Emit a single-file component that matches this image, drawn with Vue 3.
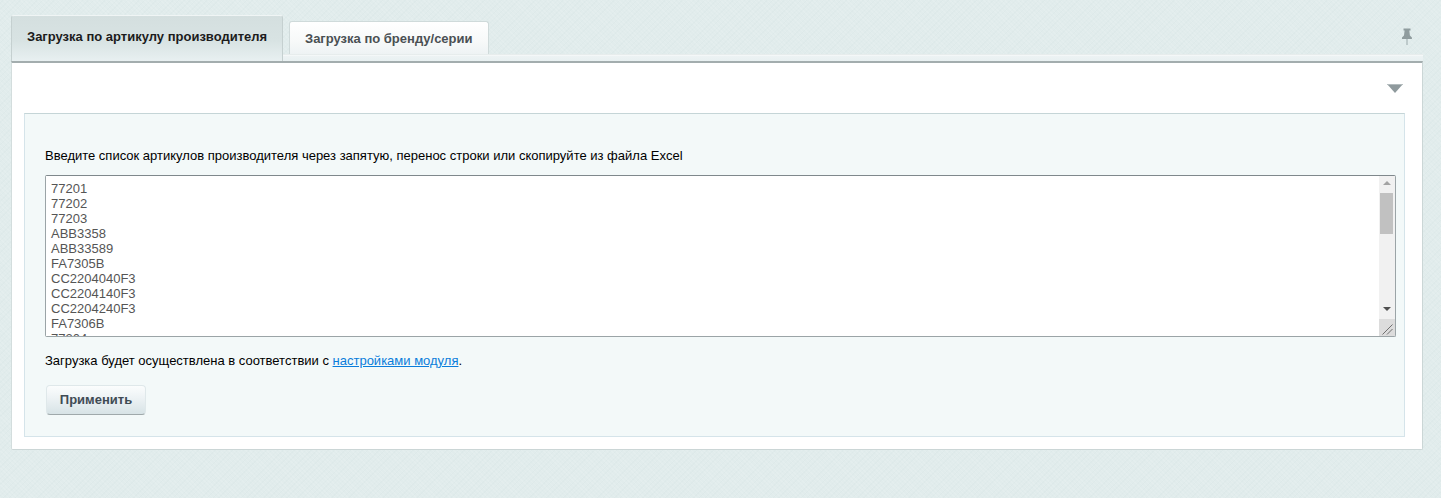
<script setup>
const tabs = [
  { label: 'Загрузка по артикулу производителя', active: true },
  { label: 'Загрузка по бренду/серии', active: false },
]
const codes = ['77201', '77202', '77203', 'ABB3358', 'ABB33589', 'FA7305B', 'CC2204040F3', 'CC2204140F3', 'CC2204240F3', 'FA7306B', '77204', '77205']
const text = codes.join('\n')
</script>

<template>
  <div class="page">
    <div class="tabs">
      <div v-for="t in tabs" :key="t.label" class="tab" :class="{ active: t.active }">{{ t.label }}</div>
      <svg class="pin" width="12" height="17" viewBox="0 0 12 17">
        <path d="M2.5 0.5h7v2h-1.2l0.6 5 2 2v1.500H1v-1.500l2-2 0.6-5H2.500z" fill="#8f9c9e" />
        <rect x="5.500" y="11" width="1" height="6" fill="#9aa7a9" />
      </svg>
    </div>
    <div class="panel">
      <div class="collapse">
        <svg width="16" height="9" viewBox="0 0 16 9">
          <path d="M0 0h16L8 9z" fill="#8f9a9d" />
          <path d="M0 0h16l-1 1H1z" fill="#b3bcbe" />
        </svg>
      </div>
      <div class="box">
        <p class="label">Введите список артикулов производителя через запятую, перенос строки или скопируйте из файла Excel</p>
        <div class="field">
          <textarea class="input" :value="text" spellcheck="false"></textarea>
          <div class="scrollbar">
            <div class="arrow-wrap up"><span class="arrow-up"></span></div>
            <div class="thumb"></div>
            <div class="track"></div>
            <div class="arrow-wrap down"><span class="arrow-down"></span></div>
            <div class="corner">
              <svg width="15" height="17" viewBox="0 0 15 17">
                <path d="M3.500 15.500L13.500 5.500M8 15.500L13.500 10" stroke="#6f6f6f" stroke-width="1" fill="none" />
              </svg>
            </div>
          </div>
        </div>
        <p class="note">Загрузка будет осуществлена в соответствии с <a href="#" class="link">настройками модуля</a>.</p>
        <button class="apply" type="button">Применить</button>
      </div>
    </div>
  </div>
</template>

<style>
html, body { margin: 0; background: #e1ecec; }
</style>

<style scoped>
.page {
  width: 1441px;
  height: 498px;
  box-sizing: border-box;
  padding: 15px 18px 0 11px;
  background-color: #e1ecec;
  background-image: repeating-linear-gradient(45deg, rgba(255, 255, 255, 0.1) 0 1px, transparent 1px 3px), repeating-linear-gradient(-45deg, rgba(190, 210, 210, 0.1) 0 1px, transparent 1px 4px);
  font-family: "Liberation Sans", Arial, sans-serif;
  overflow: hidden;
}
.tabs {
  display: flex;
  align-items: flex-end;
  height: 46px;
  background: linear-gradient(to bottom, transparent 39px, #d3dddd 39px, #fbfcfc 40px, #edf3f4 41px, #e8f0f1 46px);
}
.tab {
  box-sizing: border-box;
  font-size: 13px;
  font-weight: bold;
  border-radius: 3px 3px 0 0;
}
.tab.active {
  width: 272px;
  height: 46px;
  padding: 7px 0 0 15px;
  line-height: 28px;
  color: #1c1c1c;
  background: linear-gradient(to bottom, #d4dfdf 0, #d8e3e3 25px, #e8f0f1 100%);
  border: 1px solid #c5d0d0;
  border-top-color: #f0f5f5;
  border-bottom: 0;
}
.tab:not(.active) {
  width: 200px;
  height: 33px;
  margin: 0 0 7px 6px;
  padding: 0 0 0 15px;
  line-height: 33px;
  color: #4a5053;
  background: linear-gradient(to bottom, #ffffff 0, #f7f9f9 60%, #eef3f4 100%);
  border: 1px solid #cfdada;
  border-bottom: 0;
}
.pin {
  align-self: flex-start;
  margin: 13px 10px 0 auto;
}
.panel {
  box-sizing: border-box;
  height: 389px;
  padding: 0 17px 12px 12px;
  background: #fff;
  border: 1px solid #cbd6d6;
  border-top: 2px solid #a3adae;
  border-left-color: #d3dddd;
  border-radius: 0 0 2px 2px;
}
.collapse {
  display: flex;
  justify-content: flex-end;
  height: 50px;
  box-sizing: border-box;
  padding: 21px 2px 0 0;
}
.box {
  box-sizing: border-box;
  height: 324px;
  padding: 34px 8px 0 20px;
  background: #f3f9f9;
  border: 1px solid #d5e4ea;
  border-top-color: #c5d5d7;
}
.label {
  margin: 0;
  font-size: 13px;
  line-height: 15px;
  color: #000;
}
.field {
  display: flex;
  box-sizing: border-box;
  height: 162px;
  margin-top: 12px;
  background: #fff;
  border: 1px solid #9ba4a7;
  border-top-color: #7f888c;
  border-radius: 2px;
}
.input {
  flex: 1;
  min-width: 0;
  box-sizing: border-box;
  height: 100%;
  margin: 0;
  padding: 5px 5px 0;
  border: 0;
  outline: 0;
  resize: none;
  overflow: hidden;
  font-family: "Liberation Sans", Arial, sans-serif;
  font-size: 13px;
  line-height: 15px;
  color: #555;
  background: #fff;
}
.scrollbar {
  display: flex;
  flex-direction: column;
  flex: none;
  width: 16px;
  background: #f1f1f1;
}
.arrow-wrap {
  display: flex;
  justify-content: center;
  flex: none;
}
.arrow-wrap.up { height: 17px; padding-top: 5px; box-sizing: border-box; }
.arrow-wrap.down { height: 16px; padding-top: 4px; box-sizing: border-box; }
.arrow-up, .arrow-down {
  width: 0;
  height: 0;
  border-left: 4px solid transparent;
  border-right: 4px solid transparent;
}
.arrow-up { border-bottom: 4px solid #a3a3a3; }
.arrow-down { border-top: 4px solid #505050; }
.thumb {
  flex: none;
  height: 41px;
  margin: 0 2px 0 1px;
  background: #c1c1c1;
}
.track { flex: 1; }
.corner {
  flex: none;
  height: 17px;
  background: #dcdcdc;
}
.corner svg { display: block; }
.note {
  margin: 16px 0 0;
  font-size: 13px;
  line-height: 15px;
  color: #000;
}
.link { color: #0a7ddb; text-decoration: underline; }
.apply {
  display: block;
  box-sizing: border-box;
  width: 100px;
  height: 30px;
  margin: 17px 0 0 1px;
  padding: 0 0 1px;
  font-family: "Liberation Sans", Arial, sans-serif;
  font-size: 13px;
  font-weight: bold;
  color: #3f4b54;
  background: linear-gradient(to bottom, #fbfdfd 0, #eef3f5 40%, #d7e3e6 100%);
  border: 1px solid #dfe8ea;
  border-bottom: 1px solid #9fa9ab;
  border-radius: 4px;
}
</style>
